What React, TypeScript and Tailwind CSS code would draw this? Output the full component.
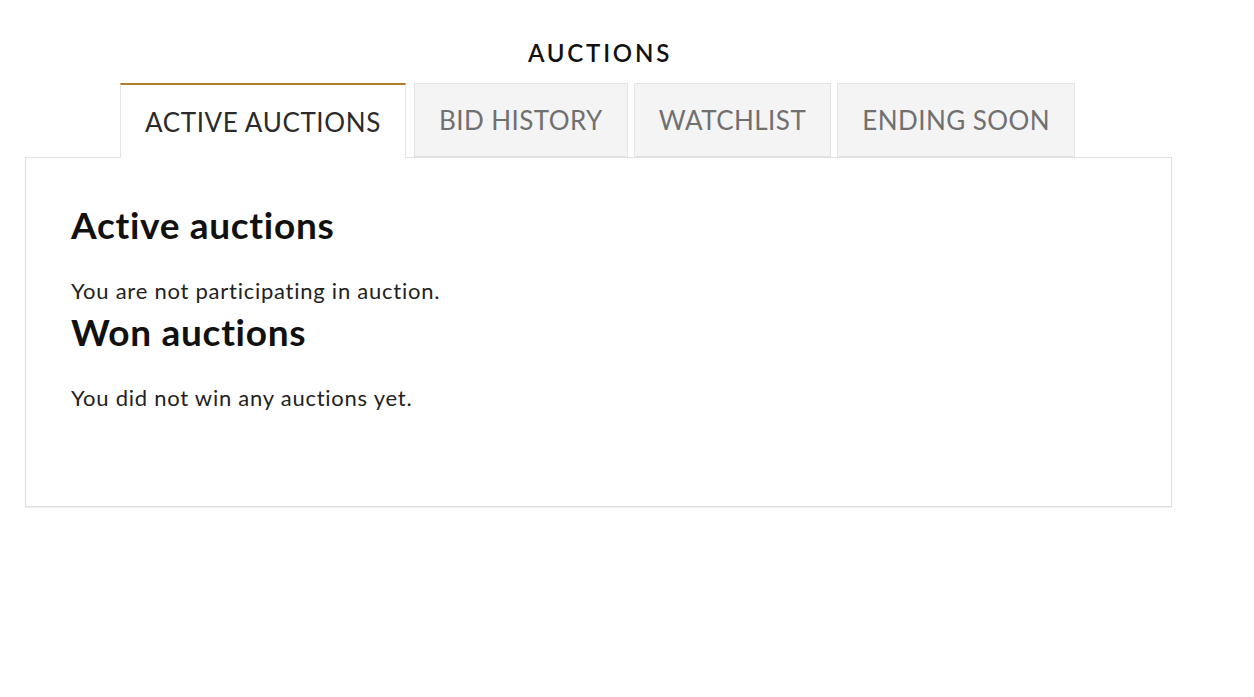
export default function App() {
  const tabs = ['ACTIVE AUCTIONS', 'BID HISTORY', 'WATCHLIST', 'ENDING SOON'];
  return (
    <div className="min-h-[697px] bg-white font-['Lato',sans-serif] text-[#111]">
      <div className="ml-[25px] w-[1147px] pt-[36px]">
        <h1 className="pl-[3px] text-center text-[24px] font-semibold leading-[34px] tracking-[2.8px]">AUCTIONS</h1>
        <div className="mt-[13px] flex gap-[6px] pl-[95px]">
          {tabs.map((t, i) =>
            i === 0 ? (
              <div
                key={t}
                className="relative z-10 -mb-px mr-[2px] flex h-[75px] items-center border-x border-t-2 border-x-[#e3e3e3] border-t-[#b07d2c] bg-white px-6 pt-[1px] text-[26px] tracking-[0.62px] text-[#2b2b2b]"
              >
                {t}
              </div>
            ) : (
              <div
                key={t}
                className="flex h-[74px] items-center border border-[#e3e3e3] bg-[#f4f4f4] px-6 text-[26px] tracking-[0.45px] text-[#707070]"
              >
                {t}
              </div>
            )
          )}
        </div>
        <div className="h-[350px] border border-[#e0e0e0] px-[45px] pt-[45px] shadow-[0_1px_1px_rgba(0,0,0,0.06)]">
          <h2 className="text-[37px] font-bold leading-[44px] tracking-[0.7px]">Active auctions</h2>
          <p className="mb-[6px] mt-[31px] text-[22px] leading-[26px] tracking-[0.75px] text-[#222]">
            You are not participating in auction.
          </p>
          <h2 className="text-[37px] font-bold leading-[44px] tracking-[0.7px]">Won auctions</h2>
          <p className="mt-[31px] text-[22px] leading-[26px] tracking-[0.75px] text-[#222]">
            You did not win any auctions yet.
          </p>
        </div>
      </div>
    </div>
  );
}
